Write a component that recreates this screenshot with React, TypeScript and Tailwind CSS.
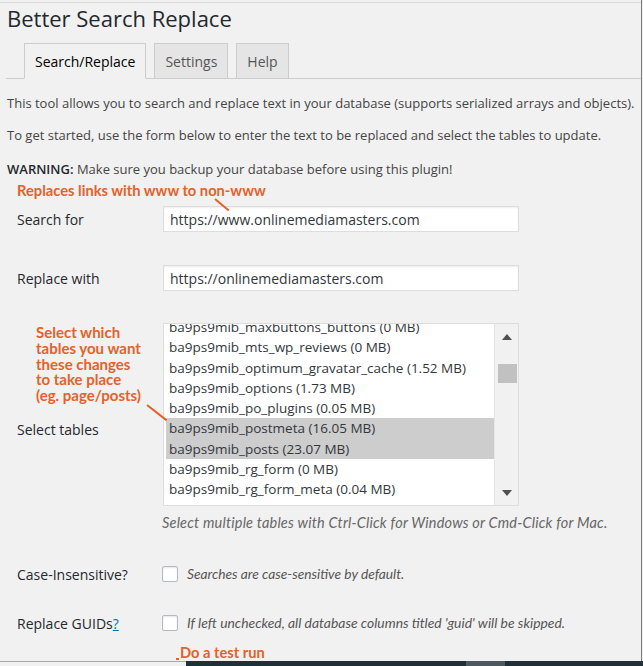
import React from 'react';

const tables = [
  { name: 'ba9ps9mib_maxbuttons_buttons (0 MB)', on: false },
  { name: 'ba9ps9mib_mts_wp_reviews (0 MB)', on: false },
  { name: 'ba9ps9mib_optimum_gravatar_cache (1.52 MB)', on: false },
  { name: 'ba9ps9mib_options (1.73 MB)', on: false },
  { name: 'ba9ps9mib_po_plugins (0.05 MB)', on: false },
  { name: 'ba9ps9mib_postmeta (16.05 MB)', on: true },
  { name: 'ba9ps9mib_posts (23.07 MB)', on: true },
  { name: 'ba9ps9mib_rg_form (0 MB)', on: false },
  { name: 'ba9ps9mib_rg_form_meta (0.04 MB)', on: false },
];

const ui = { fontFamily: '"Open Sans", "Noto Sans", sans-serif' };
const note = { fontFamily: 'Lato, "Open Sans", sans-serif' };

const Checkbox: React.FC = () => (
  <span className="block w-4 h-4 shrink-0 bg-white border border-[#b4b9be] rounded-[2px] shadow-[inset_0_1px_2px_rgba(0,0,0,0.1)]" />
);

export default function App() {
  return (
    <div className="w-[643px] h-[666px] bg-[#f1f1f1] flex flex-col overflow-hidden text-[#444]" style={ui}>
      <div className="flex-1 flex flex-col border-r border-[#7a7a7a] mr-[1px] overflow-hidden">
        <div className="mt-[2px] border-t border-[#d9d9d9]" />

        {/* Header */}
        <h1 className="ml-[7px] mt-[1px] text-[22px] leading-[28px] text-[#23282d]">Better Search Replace</h1>

        {/* Tabs */}
        <div className="mt-[11px] ml-[6px] flex items-end gap-2 border-b border-[#ccc] pl-[18px] h-[36px]">
          <span className="h-[36px] -mb-px px-[10px] flex items-center border border-[#ccc] border-b-[#f1f1f1] bg-[#f1f1f1] text-[14px] font-medium text-[#000]">Search/Replace</span>
          <span className="h-[35px] px-[10px] flex items-center border border-[#ccc] border-b-0 bg-[#e5e5e5] text-[14px] font-medium text-[#555]">Settings</span>
          <span className="h-[35px] px-[10px] flex items-center border border-[#ccc] border-b-0 bg-[#e5e5e5] text-[14px] font-medium text-[#555]">Help</span>
        </div>

        {/* Intro */}
        <div className="ml-[7px] text-[13px] text-[#444]">
          <p className="mt-[14px] leading-[20px]">This tool allows you to search and replace text in your database (supports serialized arrays and objects).</p>
          <p className="mt-[12px] leading-[20px]">To get started, use the form below to enter the text to be replaced and select the tables to update.</p>
          <p className="mt-[14px] leading-[20px]"><span className="font-semibold text-[#23282d]">WARNING:</span> Make sure you backup your database before using this plugin!</p>
        </div>

        {/* Form */}
        <div className="ml-[17px]">
          <div className="relative h-[18px] -mt-px z-10">
            <span className="text-[14.7px] leading-[18px] font-bold text-[#e4612a]" style={note}>Replaces links with www to non-www</span>
            <span className="absolute left-[198px] top-[20px] w-[18px] h-[2px] bg-[#e4612a] rotate-[40deg] origin-left" />
          </div>

          <div className="mt-[10px] flex items-center">
            <span className="w-[146px] text-[14px] font-medium text-[#23282d]">Search for</span>
            <div className="w-[356px] h-[26px] bg-white border border-[#ddd] shadow-[inset_0_1px_2px_rgba(0,0,0,0.07)] px-[6px] flex items-center text-[14px] text-[#32373c]">https://www.onlinemediamasters.com</div>
          </div>

          <div className="mt-[33px] flex items-center">
            <span className="w-[146px] text-[14px] font-medium text-[#23282d]">Replace with</span>
            <div className="w-[356px] h-[26px] bg-white border border-[#ddd] shadow-[inset_0_1px_2px_rgba(0,0,0,0.07)] px-[6px] flex items-center text-[14px] text-[#32373c]">https://onlinemediamasters.com</div>
          </div>

          <div className="mt-[32px] flex">
            <div className="w-[146px] flex flex-col">
              <div className="relative ml-[19px] mt-[2px] text-[15px] leading-[15.75px] font-bold text-[#e4612a]" style={note}>
                <p>Select which</p>
                <p>tables you want</p>
                <p>these changes</p>
                <p>to take place</p>
                <p>(eg. page/posts)</p>
                <span className="absolute left-[111px] top-[79px] w-[25px] h-[2px] bg-[#e4612a] rotate-[38deg] origin-left" />
              </div>
              <span className="mt-[15px] text-[14px] font-medium text-[#23282d]">Select tables</span>
            </div>

            <div className="w-[356px] h-[183px] bg-white border border-[#ddd] flex overflow-hidden">
              <div className="flex-1 -mt-[7px] pl-[2px]">
                {tables.map((t) => (
                  <div
                    key={t.name}
                    className={`h-[20.25px] px-[3px] flex items-center text-[13.5px] text-[#32373c] whitespace-nowrap ${t.on ? 'bg-[#cdcdcd]' : ''}`}
                  >
                    {t.name}
                  </div>
                ))}
              </div>
              <div className="w-[24px] bg-[#f1f1f1] border-l border-[#e6e6e6] flex flex-col items-center">
                <svg className="mt-[10px]" width="10" height="6" viewBox="0 0 10 6"><path d="M0 6 L5 0 L10 6 Z" fill="#505050" /></svg>
                <div className="mt-[24px] w-[19px] h-[19px] bg-[#c1c1c1] ml-[2px]" />
                <div className="flex-1" />
                <svg className="mb-[9px]" width="10" height="6" viewBox="0 0 10 6"><path d="M0 0 L10 0 L5 6 Z" fill="#505050" /></svg>
              </div>
            </div>
          </div>

          <p className="ml-[145px] mt-[7px] text-[14.5px] leading-[20px] tracking-[0.2px] italic text-[#666]" style={note}>Select multiple tables with Ctrl-Click for Windows or Cmd-Click for Mac.</p>

          <div className="mt-[31px] flex items-center h-[20px]">
            <span className="w-[145px] text-[14px] font-medium text-[#23282d]">Case-Insensitive?</span>
            <Checkbox />
            <span className="ml-[9px] text-[13.75px] italic text-[#555]" style={note}>Searches are case-sensitive by default.</span>
          </div>

          <div className="mt-[29px] flex items-center h-[20px]">
            <span className="w-[145px] text-[14px] font-medium text-[#23282d]">
              Replace GUIDs<span className="text-[#0073aa] underline">?</span>
            </span>
            <Checkbox />
            <span className="ml-[9px] text-[13.9px] italic text-[#555]" style={note}>If left unchecked, all database columns titled 'guid' will be skipped.</span>
          </div>

          <div className="relative ml-[163px] mt-[7px] h-[18px]">
            <span className="text-[14.7px] leading-[18px] font-bold text-[#e4612a]" style={note}>Do a test run</span>
            <span className="absolute -left-[4px] top-[18px] w-[3px] h-[2px] bg-[#e4612a]" />
          </div>
        </div>
      </div>

      {/* Window edge */}
      <div className="h-[5px] flex">
        <div className="w-[186px] border-t border-[#a9a9a9]" />
        <div className="flex-1 bg-[#1f3039] flex">
          <div className="ml-[280px] w-[39px] bg-[#4d5960]" />
        </div>
      </div>
    </div>
  );
}
